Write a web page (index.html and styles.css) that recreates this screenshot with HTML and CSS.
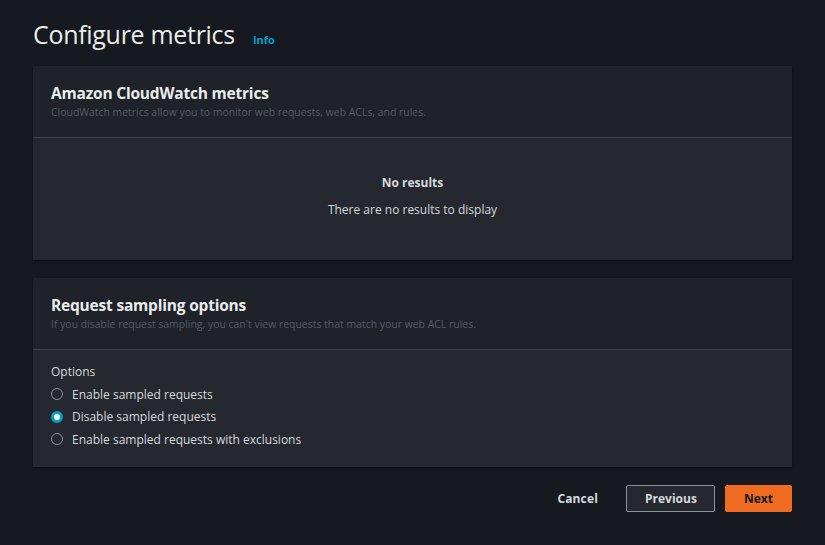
FILE: index.html
```html
<!DOCTYPE html>
<html lang="en">
<head>
<meta charset="utf-8">
<title>Configure metrics</title>
<link rel="stylesheet" href="styles.css">
</head>
<body>
<main class="page">
  <header class="page-head">
    <h1 class="page-title">Configure metrics</h1>
    <a class="info" href="#">Info</a>
  </header>

  <section class="panel">
    <div class="panel-head">
      <h2 class="panel-title">Amazon CloudWatch metrics</h2>
      <p class="panel-desc">CloudWatch metrics allow you to monitor web requests, web ACLs, and rules.</p>
    </div>
    <div class="panel-body empty">
      <p class="empty-title">No results</p>
      <p class="empty-text">There are no results to display</p>
    </div>
  </section>

  <section class="panel">
    <div class="panel-head">
      <h2 class="panel-title">Request sampling options</h2>
      <p class="panel-desc">If you disable request sampling, you can't view requests that match your web ACL rules.</p>
    </div>
    <div class="panel-body options">
      <p class="field-label">Options</p>
      <label class="radio"><span class="dot"></span>Enable sampled requests</label>
      <label class="radio"><span class="dot checked"></span>Disable sampled requests</label>
      <label class="radio"><span class="dot"></span>Enable sampled requests with exclusions</label>
    </div>
  </section>

  <footer class="actions">
    <button class="btn link">Cancel</button>
    <button class="btn normal">Previous</button>
    <button class="btn primary">Next</button>
  </footer>
</main>
</body>
</html>
```
FILE: styles.css
```css
* { box-sizing: border-box; }
html, body { margin: 0; padding: 0; }
body {
  background: #16191f;
  color: #d1d5db;
  font-family: "Open Sans", "Noto Sans", sans-serif;
  width: 825px;
  height: 545px;
  overflow: hidden;
}
.page {
  padding: 16px 33px 0 33px;
  display: flex;
  flex-direction: column;
}
.page-head {
  display: flex;
  align-items: baseline;
  gap: 18px;
  height: 50px;
  padding-top: 1px;
}
.page-title {
  margin: 0;
  font-size: 25px;
  font-weight: 400;
  color: #eaeded;
  letter-spacing: -0.3px;
}
.info {
  color: #00a1c9;
  font-size: 11px;
  font-weight: 700;
  text-decoration: none;
}
.panel {
  background: #25282e;
  box-shadow: 0 1px 2px rgba(0,0,0,0.5);
  margin-bottom: 18px;
}
.panel-head {
  background: #1f2229;
  height: 72px;
  padding: 16px 18px 0 18px;
  border-bottom: 1px solid #3c4049;
}
.panel-title {
  margin: 0;
  font-size: 15.5px;
  font-weight: 700;
  color: #eaeded;
  line-height: 22px;
  letter-spacing: -0.2px;
}
.panel-desc {
  margin: 1px 0 0 0;
  font-size: 10.45px;
  color: #545c66;
  line-height: 15px;
}
.panel-body.empty {
  height: 122px;
  display: flex;
  flex-direction: column;
  align-items: center;
  padding-top: 36px;
}
.empty-title {
  margin: 0;
  font-size: 12px;
  font-weight: 700;
  color: #d5d9dd;
  line-height: 18px;
}
.empty-text {
  margin: 9px 0 0 0;
  font-size: 12px;
  color: #d5d9dd;
  line-height: 18px;
}
.panel-body.options {
  height: 117px;
  padding: 13px 18px 0 18px;
  display: flex;
  flex-direction: column;
}
.field-label {
  margin: 0 0 2px 0;
  font-size: 12px;
  color: #d5d9dd;
  line-height: 18px;
}
.radio {
  display: flex;
  align-items: center;
  gap: 9px;
  font-size: 12px;
  color: #d5d9dd;
  height: 22.5px;
}
.dot {
  width: 12px;
  height: 12px;
  border-radius: 50%;
  border: 1px solid #879596;
  display: inline-block;
  flex: none;
}
.dot.checked {
  border: 3px solid #00a1c9;
  background: #ffffff;
}
.actions {
  display: flex;
  justify-content: flex-end;
  align-items: center;
  gap: 10px;
  margin-top: 0;
}
.btn {
  font-family: inherit;
  font-size: 12px;
  font-weight: 700;
  height: 27px;
  padding: 0 18px;
  border-radius: 2px;
  cursor: pointer;
}
.btn.link {
  background: transparent;
  border: none;
  color: #d5d9dd;
  margin-right: 0;
  letter-spacing: 0.15px;
}
.btn.normal {
  background: #25282e;
  border: 1px solid #879596;
  color: #d5d9dd;
  width: 89px;
}
.btn.primary {
  background: #ef6b21;
  border: 1px solid #ef6b21;
  color: #16191f;
  width: 67px;
}
```
